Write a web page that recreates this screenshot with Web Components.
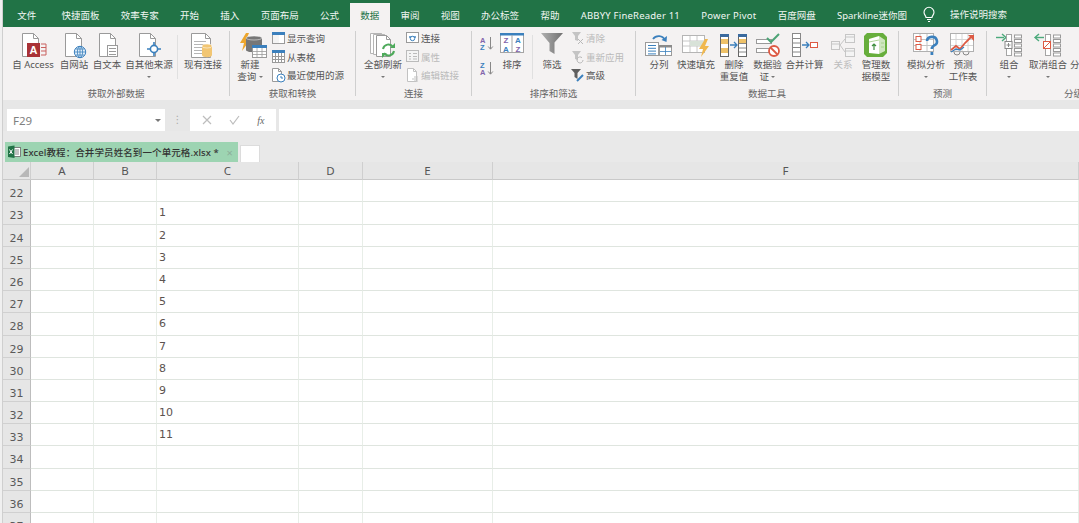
<!DOCTYPE html>
<html lang="zh"><head><meta charset="utf-8"><title>Excel</title>
<style>
html,body{margin:0;padding:0;width:1079px;height:523px;overflow:hidden;background:#fff}
body{font-family:"Noto Sans","Noto Sans CJK SC",sans-serif}
</style></head><body>
<x-app>
  <x-tabbar>
    <x-tab first>文件</x-tab><x-tab>快捷面板</x-tab><x-tab>效率专家</x-tab><x-tab>开始</x-tab><x-tab>插入</x-tab><x-tab>页面布局</x-tab><x-tab>公式</x-tab><x-tab active>数据</x-tab><x-tab>审阅</x-tab><x-tab>视图</x-tab><x-tab>办公标签</x-tab><x-tab>帮助</x-tab><x-tab wide>ABBYY FineReader 11</x-tab><x-tab wide>Power Pivot</x-tab><x-tab>百度网盘</x-tab><x-tab>Sparkline迷你图</x-tab>
    <x-tell>操作说明搜索</x-tell>
  </x-tabbar>
  <x-ribbon>
    <x-group w="227" pad="7" label="获取外部数据">
      <x-big w="46" icon="access">自 Access</x-big>
      <x-big w="36" icon="web">自网站</x-big>
      <x-big w="30" icon="text">自文本</x-big>
      <x-big w="54" icon="other" arrow="1">自其他来源</x-big>
      <x-vsep ml="1"></x-vsep>
      <x-big w="46" ml="2" icon="exist">现有连接</x-big>
    </x-group>
    <x-group w="126" pad="8" label="获取和转换">
      <x-big w="24" icon="query" lines="新建|查询" arrow="i">新建</x-big>
      <x-col ml="10">
        <x-small icon="showq">显示查询</x-small>
        <x-small icon="fromt">从表格</x-small>
        <x-small icon="recent">最近使用的源</x-small>
      </x-col>
    </x-group>
    <x-group w="116" pad="8" label="连接">
      <x-big w="38" icon="refresh" arrow="1">全部刷新</x-big>
      <x-col ml="4">
        <x-small icon="conn">连接</x-small>
        <x-small icon="prop" off>属性</x-small>
        <x-small icon="edit" off>编辑链接</x-small>
      </x-col>
    </x-group>
    <x-group w="164" pad="8" label="排序和筛选">
      <x-sortcol><x-icon name="az"></x-icon><x-icon name="za"></x-icon></x-sortcol>
      <x-big w="30" ml="3" icon="sort">排序</x-big>
      <x-vsep ml="5"></x-vsep>
      <x-big w="30" ml="4" icon="funnel">筛选</x-big>
      <x-col ml="4">
        <x-small icon="clear" off>清除</x-small>
        <x-small icon="reapply" off>重新应用</x-small>
        <x-small icon="adv">高级</x-small>
      </x-col>
    </x-group>
    <x-group w="263" pad="6" label="数据工具">
      <x-big w="34" icon="split">分列</x-big>
      <x-big w="40" icon="flash">快速填充</x-big>
      <x-big w="36" icon="dup" lines="删除|重复值">删除</x-big>
      <x-big w="31" icon="valid" lines="数据验|证" arrow="i">数据验</x-big>
      <x-big w="43" icon="cons">合并计算</x-big>
      <x-big w="34" icon="rel" off>关系</x-big>
      <x-big w="32" icon="model" lines="管理数|据模型">管理数</x-big>
    </x-group>
    <x-group w="88" pad="5" label="预测">
      <x-big w="44" icon="whatif" arrow="1">模拟分析</x-big>
      <x-big w="30" icon="fore" lines="预测|工作表">预测</x-big>
    </x-group>
    <x-group w="192" pad="4" label="分级显示" last>
      <x-big w="36" icon="grp" arrow="1">组合</x-big>
      <x-big w="42" icon="ungrp" arrow="1">取消组合</x-big>
      <x-big w="40" icon="sub">分类汇总</x-big>
    </x-group>
  </x-ribbon>
  <x-formula></x-formula>
  <x-doctabs>Excel教程：合并学员姓名到一个单元格.xlsx *</x-doctabs>
  <x-sheet></x-sheet>
</x-app>
<script>
const G='#9a9a9a',B='#3b80bd',GR='#217346',R='#dd5a44',O='#eda62d',L='#b5b5b5';
const page=(x,y,w,h,f=5,s=G)=>`<path d="M${x+.5} ${y+.5}h${w-f}l${f} ${f}v${h-f}h-${w}z" fill="#fff" stroke="${s}"/><path d="M${x+w-f+.5} ${y+.5}v${f}h${f}" fill="none" stroke="${s}"/>`;
const table=(x,y,w,h,c,s=G,top=B)=>{let r=`<rect x="${x+.5}" y="${y+.5}" width="${w}" height="${h}" fill="#fff" stroke="${s}"/><rect x="${x}" y="${y}" width="${w+1}" height="3" fill="${top}"/>`;for(let i=1;i<c[0];i++){const X=x+Math.round(w*i/c[0])+.5;r+=`<path d="M${X} ${y+3}V${y+h}" stroke="${s}"/>`}for(let i=1;i<c[1];i++){const Y=y+3+Math.round((h-3)*i/c[1])+.5;r+=`<path d="M${x} ${Y}H${x+w}" stroke="${s}"/>`}return r};
const lines=(x,y,w,n,d=3,s='#9a9a9a')=>{let r='';for(let i=0;i<n;i++)r+=`<path d="M${x} ${y+i*d+.5}h${w}" stroke="${s}"/>`;return r};
const arrow=(x,y,w,c=B,dir=1)=>`<path d="M${x} ${y}h${w*dir}m${-3*dir} -3l${3*dir} 3l${-3*dir} 3" fill="none" stroke="${c}" stroke-width="1.3"/>`;
const bolt=(x,y,s=1,c=O)=>`<path transform="translate(${x} ${y}) scale(${s})" d="M6 0L0 10h4L2 18L10 7H6L9 0z" fill="${c}"/>`;
const cyl=(x,y,w,h,c)=>`<path d="M${x} ${y+2}v${h-4}c0 3 ${w} 3 ${w} 0v-${h-4}z" fill="${c}"/><ellipse cx="${x+w/2}" cy="${y+2}" rx="${w/2}" ry="2" fill="${c}" stroke="#fff" stroke-width=".5"/>`;
const sicol=(x,y,n,w=8,h=3.5,s=G)=>{let r='';for(let i=0;i<n;i++)r+=`<rect x="${x+.5}" y="${y+i*(h+1.5)+.5}" width="${w}" height="${h}" fill="#fff" stroke="${s}"/>`;return r};
const ICONS={
 access:[26,25,page(2,0,16,23)+`<path d="M21 11h5v11h-5M21 14.5h5M21 18h5" fill="none" stroke="#c9605e"/><rect x="7" y="10" width="13" height="14" fill="#a93237"/><text x="13.5" y="21" font-size="11" font-weight="700" fill="#fff" text-anchor="middle" font-family="Liberation Sans">A</text>`],
 web:[24,25,page(3,0,16,23)+`<circle cx="18" cy="19" r="5.7" fill="#e4f0fa" stroke="${B}"/><path d="M12.5 19h11M18 13.3v11.4M13.5 16h9M13.5 22h9" stroke="${B}" stroke-width=".8"/><ellipse cx="18" cy="19" rx="2.6" ry="5.7" fill="none" stroke="${B}" stroke-width=".8"/>`],
 text:[24,25,page(4,0,16,23)+`<rect x="12.5" y="12.5" width="10" height="11" fill="#fff" stroke="${G}"/>`+lines(14,15,7,3,3)],
 other:[26,25,page(3,0,16,23)+`<circle cx="18" cy="16" r="3.6" fill="#fff" stroke="${B}" stroke-width="1.6"/><path d="M18 9v3M18 20v3M11 16h3M22 16h3" stroke="${B}" stroke-width="1.6"/>`],
 exist:[26,25,page(1,0,19,24)+lines(4,8,12,5,3,'#b5b5b5')+cyl(12,11,10,13,'#f2c673')],
 query:[36,25,bolt(8,0,1,O)+cyl(14,3,16,16,'#777')+`<rect x="20.5" y="12.5" width="14" height="12" fill="#fff" stroke="${G}"/><rect x="20" y="12" width="15" height="3" fill="${B}"/><path d="M25 15v9M30 15v9M21 18.5h13M21 21.5h13" stroke="${G}" stroke-width=".8"/>`],
 showq:[13,13,table(0,0,12,11,[2,1],G)+`<rect x="1" y="3" width="6" height="8" fill="#f4f4f4"/>`],
 fromt:[13,13,table(0,0,12,12,[4,3],G)],
 recent:[14,15,page(0,0,9,13,3)+`<circle cx="9" cy="10" r="4" fill="#fff" stroke="${B}"/><path d="M9 8v2h2" fill="none" stroke="${B}"/>`],
 refresh:[26,25,page(0,0,14,20,3,L)+page(3,1,14,20,3,L)+page(6,2,14,21,4,G)+`<path d="M13 16a5.5 5.5 0 0 1 10-2M24 18a5.5 5.5 0 0 1-10 2" fill="none" stroke="#4eaa5b" stroke-width="2"/><path d="M25 10v5h-5zM12 25v-5h5z" fill="#4eaa5b"/>`],
 conn:[13,13,`<rect x=".5" y=".5" width="12" height="10" fill="#fff" stroke="${G}"/><path d="M3 5h7" stroke="${B}" stroke-width="1.400"/><circle cx="6.5" cy="6.500" r="2.200" fill="#fff" stroke="${B}"/>`],
 prop:[13,13,`<rect x=".5" y=".5" width="12" height="11" fill="#f4f4f4" stroke="#bbb"/><path d="M3 3.5h2M7 3.5h4M3 6.5h2M7 6.5h4M3 9h2M7 9h4" stroke="#bbb"/>`],
 edit:[13,14,page(1,0,9,13,3,'#c2c2c2')+`<path d="M6 11h6M8 9h4M8 13h4" stroke="#c2c2c2"/>`],
 az:[14,15,`<text x="0" y="7" font-size="7.5" font-weight="700" fill="#8265ab" font-family="Liberation Sans">A</text><text x="0" y="14" font-size="7.5" font-weight="700" fill="#3b80bd" font-family="Liberation Sans">Z</text><path d="M10.5 1v12m-2.3-2.5l2.3 2.7l2.3-2.7" fill="none" stroke="#888"/>`],
 za:[14,15,`<text x="0" y="7" font-size="7.5" font-weight="700" fill="#3b80bd" font-family="Liberation Sans">Z</text><text x="0" y="14" font-size="7.5" font-weight="700" fill="#8265ab" font-family="Liberation Sans">A</text><path d="M10.5 1v12m-2.3-2.5l2.3 2.7l2.3-2.7" fill="none" stroke="#888"/>`],
 sort:[24,25,`<rect x=".5" y="1.500" width="23" height="18" fill="#fff" stroke="#a5a5a5"/><rect x="0" y="0" width="24" height="2.5" fill="${B}"/><path d="M12 2v18" stroke="#a5a5a5"/><g font-size="8" font-weight="700" font-family="Liberation Sans" text-anchor="middle"><text x="6" y="10" fill="#8265ab">Z</text><text x="6" y="18.5" fill="${B}">A</text><text x="18" y="10" fill="${B}">A</text><text x="18" y="18.5" fill="#8265ab">Z</text></g>`],
 funnel:[24,25,`<defs><linearGradient id="f" x1="0" x2="1"><stop offset="0" stop-color="#b0b0b0"/><stop offset="1" stop-color="#707070"/></linearGradient></defs><path d="M1 0h22l-8.500 9.500V21l-5-3v-8z" fill="url(#f)"/>`],
 clear:[13,14,`<path d="M1 1h9L7 5v5L4 9V5z" fill="#c4c4c4"/><path d="M7 8l5 5m0-5l-5 5" stroke="#b8b8b8"/>`],
 reapply:[13,14,`<path d="M1 1h9L7 5v5L4 9V5z" fill="#c4c4c4"/><path d="M12 10a3 3 0 1 1-1-2.300" fill="none" stroke="#b8b8b8"/>`],
 adv:[13,14,`<path d="M0 1h10L6.500 5v6L3.500 9V5z" fill="#5f5f5f"/><path d="M6 13l6-6" stroke="${B}" stroke-width="2"/>`],
 split:[28,25,`<rect x=".5" y="9.500" width="13" height="13" fill="#fff" stroke="${G}"/>`+lines(3,12,8,4,2.800,B)+`<rect x="14.500" y="12.500" width="12" height="10" fill="#fff" stroke="${G}"/><rect x="14" y="12" width="13" height="2.500" fill="#8a8a8a"/><path d="M20.500 14v8M15 18.500h11" stroke="${B}" stroke-width=".8"/><path d="M8 6a7 7 0 0 1 12 1" fill="none" stroke="${B}" stroke-width="1.800"/><path d="M22 3l-.5 6l-5-2z" fill="${B}"/>`],
 flash:[28,25,`<rect x=".5" y="2.500" width="22" height="17" fill="#fff" stroke="#b5b5b5"/><path d="M8 3v16M15 3v16M1 8h21M1 13h21" stroke="#c8c8c8"/><rect x="8" y="8" width="14" height="5" fill="#d8e2d8"/>`+bolt(17,6,1,'#f0b84f')],
 dup:[28,25,`<rect x=".5" y="1.500" width="8" height="22" fill="#fff" stroke="#666"/><rect x="1" y="6" width="7" height="5" fill="#efc268"/><rect x="1" y="15" width="7" height="5" fill="#efc268"/><rect x="0" y="1" width="9" height="3" fill="#3a6a9e"/><rect x="18.500" y="1.500" width="8" height="22" fill="#fff" stroke="#666"/><rect x="19" y="6" width="7" height="5" fill="#efc268"/><rect x="18" y="1" width="9" height="3" fill="#3a6a9e"/><path d="M19 10.500h7M19 15h7M19 19h7" stroke="#888"/>`+arrow(10,12,7)],
 valid:[24,25,`<rect x=".5" y="6.500" width="15" height="4" fill="#fff" stroke="${G}"/><rect x=".5" y="15.500" width="15" height="4" fill="#fff" stroke="${G}"/><path d="M11 5l4 4l8-8" fill="none" stroke="#4ca476" stroke-width="2"/><circle cx="18" cy="18" r="5" fill="#fff" stroke="${R}" stroke-width="1.800"/><path d="M14.500 14.500l7 7" stroke="${R}" stroke-width="1.800"/>`],
 cons:[26,25,`<rect x=".5" y=".5" width="8" height="23" fill="#fff" stroke="#888"/>`+lines(1,5,7,4,4.500,'#888')+arrow(10,12,7)+`<rect x="18.500" y="9.500" width="7" height="5" fill="#fff" stroke="${R}"/>`],
 rel:[24,25,`<g stroke="#c6c6c6" fill="#f4f4f4"><rect x=".5" y="8.500" width="8" height="8"/><rect x="14.500" y="1.500" width="9" height="8"/><rect x="14.500" y="15.500" width="9" height="8"/><path d="M9 12l5-6M9 12l5 7" fill="none"/><path d="M1 11h7M15 4h8M15 18h8" fill="none"/></g>`],
 model:[24,25,`<path d="M3 0h16l4 4v16l-4 4H3l-3-3V3z" fill="#67ae3c"/><path d="M5 6l10-3v18L5 20z" fill="#fff"/><path d="M15 3l6 4v11l-6 3z" fill="#cfe6bf"/><path d="M10 17v-6m-2 2l2-2l2 2" fill="none" stroke="#3f8f3f" stroke-width="1.200"/><path d="M5 9l10-2M17 10h3M17 14h3" stroke="#9ccb80" stroke-width=".8"/>`],
 whatif:[26,25,`<rect x=".5" y=".5" width="20" height="18" fill="#fff" stroke="#b0b0b0"/><path d="M7 1v17M14 1v17M1 6.500h19M1 12.500h19" stroke="#c4c4c4"/><rect x="3" y="3.500" width="5" height="5" fill="#fff" stroke="${R}"/><rect x="3" y="11.500" width="5" height="5" fill="#fff" stroke="${R}"/><path d="M14 8a5 4.500 0 1 1 7 4.500c-1.500 1-2.200 1.500-2.200 3.500" fill="none" stroke="${B}" stroke-width="2.600"/><rect x="17.500" y="19" width="2.800" height="3" fill="${B}"/>`],
 fore:[26,25,`<rect x=".5" y=".5" width="23" height="18" fill="#fff" stroke="#b0b0b0"/><path d="M6 1v17M12 1v17M18 1v17M1 6.500h22M1 12.500h22" stroke="#d6d6d6"/><path d="M1 17l5-4l4 3l5-6l7-7" fill="none" stroke="${R}" stroke-width="1.800"/><path d="M18 2h6v6z" fill="${R}"/><path d="M1 19l5-3l4 1l4-3" fill="none" stroke="${B}" stroke-width="1.300"/><path d="M4 19a3 3 0 0 0 6 0M13 19a3 3 0 0 0 6 0" fill="none" stroke="#888"/>`],
 grp:[28,25,`<path d="M1 4.500h8" stroke="#4caa7c" stroke-width="1.400"/><path d="M7 1l4 3.500l-4 3.500" fill="none" stroke="#4caa7c" stroke-width="1.400"/><rect x="11.500" y="1.500" width="5" height="21" fill="#fff" stroke="#a5a5a5"/><rect x="10" y="8.500" width="7" height="7" fill="#fff" stroke="#888"/><path d="M13.500 10v4M11.500 12h4" stroke="#888"/>`+sicol(19,1.500,5,7,3)],
 ungrp:[28,25,`<path d="M10 4.500H2" stroke="#4caa7c" stroke-width="1.400"/><path d="M5 1L1 4.500l4 3.500" fill="none" stroke="#4caa7c" stroke-width="1.400"/><rect x="11.500" y="1.500" width="5" height="21" fill="#fff" stroke="#a5a5a5"/><rect x="9.500" y="8.500" width="7" height="7" fill="#fff" stroke="${R}"/><path d="M10 15l6-6" stroke="${R}"/>`+sicol(19,1.500,5,7,3)],
 sub:[28,25,`<rect x="6.500" y="1.500" width="7" height="21" fill="#fff" stroke="#a5a5a5"/>`+lines(7,6,6,4,4.500,'#a5a5a5')],
 bulb:[12,15,`<path d="M3 10.500c0-1.800-2-2.600-2-5.200a5 5 0 0 1 10 0c0 2.600-2 3.400-2 5.200z" fill="none" stroke="#fff" stroke-width="1.100"/><path d="M4 12.500h4M5 14.500h2" stroke="#fff" stroke-width="1"/>`],
 xl:[14,14,`<rect x="6" y="2.500" width="7.500" height="9" fill="#fff" stroke="#666" stroke-width=".8"/><path d="M8 5h4M8 7h4M8 9h4" stroke="#555" stroke-width=".7"/><path d="M1 1.500l6.500-1V13L1 12z" fill="${GR}"/><path d="M2.500 4.500l3 4.500m0-4.500l-3 4.500" stroke="#fff"/>`]
};
function def(name,css,html,init){customElements.define(name,class extends HTMLElement{connectedCallback(){if(this.shadowRoot)return;const s=this.attachShadow({mode:'open'});s.innerHTML=`<style>${css}</style>${typeof html==='function'?html(this):html}`;init&&init(this,s)}})}
const a=(e,n,d='')=>e.getAttribute(n)??d;
def('x-icon',':host{display:block;line-height:0} svg{display:block;overflow:visible}',e=>{const i=ICONS[a(e,'name')];return `<svg width="${i[0]}" height="${i[1]}" viewBox="0 0 ${i[0]} ${i[1]}" aria-hidden="true">${i[2]}</svg>`});
def('x-app',':host{display:grid;grid-template-rows:27px 73px 31px 31px 1fr;width:1076px;height:523px;padding-left:3px;background:linear-gradient(90deg,#f0f0f0 2px,#cfcfcf 2px);overflow:hidden}','<slot></slot>');
def('x-tabbar',':host{display:flex;align-items:flex-end;background:#217346;min-width:0;overflow:hidden}','<slot></slot>');
def('x-tab',`:host{display:block;flex:none;height:24px;padding:0 10.65px;font-size:9.5px;line-height:25px;color:#f2f7f4;white-space:nowrap}
:host([first]){margin-left:3.5px;margin-right:4px}
:host([wide]){letter-spacing:.21px}
:host([active]){background:#f4f2f2;color:#217346}`,'<slot></slot>');
def('x-tell',`:host{display:flex;align-items:center;gap:15px;flex:none;height:24px;margin-left:5.500px;font-size:9.5px;color:#eef4f0;white-space:nowrap;position:relative;top:-1px}`,'<x-icon name="bulb"></x-icon><span><slot></slot></span>');
def('x-ribbon',':host{display:flex;background:#f4f2f2;padding-top:4px;box-sizing:border-box;height:73px;overflow:hidden;min-width:0}','<slot></slot>');
def('x-group',`:host{display:block;flex:none;box-sizing:border-box;height:65px;border-right:1px solid #cfcfcf;color:#555;font-size:9.5px}
:host([last]){border-right:0}
.b{display:flex;height:57px;box-sizing:border-box}
.l{text-align:center;line-height:12px;height:8px;color:#666;white-space:nowrap}`,
 e=>`<style>:host{width:${a(e,'w')}px}.b{padding-left:${a(e,'pad')}px}</style><div class="b"><slot></slot></div><div class="l">${a(e,'label')}</div>`);
def('x-big',`:host{display:flex;flex-direction:column;align-items:center;flex:none;padding-top:2px;color:#555;font-size:9.5px;line-height:12px;white-space:nowrap}
:host([off]){color:#bcbcbc}
.i{height:26px;display:flex;justify-content:center;width:100%}
.t{text-align:center;display:flex;flex-direction:column;align-items:center}
.d{display:inline-block;width:0;height:0;border:2.2px solid transparent;border-top:2.600px solid #777;border-bottom:0;vertical-align:middle}
.n{height:12px;display:flex;align-items:center;justify-content:center}`,
 e=>{const ls=a(e,'lines'),ar=a(e,'arrow');const sl=ls?ls.split('|'):null;
  const second=sl?`<div>${sl[1]}${ar==='i'?' <span class="d"></span>':''}</div>`:(ar?'<div class="n"><span class="d"></span></div>':'');
  return `<style>:host{width:${a(e,'w')}px;margin-left:${a(e,'ml','0')}px}</style><div class="i"><x-icon name="${a(e,'icon')}"></x-icon></div><div class="t"><div><slot></slot></div>${second}</div>`});
def('x-vsep',':host{display:block;flex:none;width:1px;height:44px;margin-top:4px;background:#e0e0e0}',e=>`<style>:host{margin-left:${a(e,'ml','0')}px}</style>`);
def('x-col',':host{display:flex;flex-direction:column;flex:none;margin-top:-2px}',e=>`<style>:host{margin-left:${a(e,'ml','0')}px}</style><slot></slot>`);
def('x-sortcol',':host{display:flex;flex-direction:column;gap:10px;flex:none;width:14px;padding-top:5px}','<slot></slot>');
def('x-small',`:host{display:flex;align-items:center;gap:2px;height:18.500px;font-size:9.5px;color:#555;white-space:nowrap}
:host([off]){color:#bababa}.i{width:13px;display:flex;justify-content:center}`,e=>`<div class="i"><x-icon name="${a(e,'icon')}"></x-icon></div><slot></slot>`);
def('x-formula',`:host{display:flex;box-sizing:border-box;height:31px;padding:9px 0 0 4px;background:#e7e7e7;font-family:"DejaVu Sans",sans-serif}
.box{background:#fff;height:22px;box-sizing:border-box;display:flex;align-items:center}
.name{width:158px;padding:0 4px 0 6px;justify-content:space-between;color:#808080;font-size:11.500px;font-family:"Noto Sans",sans-serif}
.d{width:0;height:0;border:3px solid transparent;border-top:3.500px solid #777;border-bottom:0}
.dots{width:25px;text-align:center;color:#aaa;font-size:10px;line-height:22px}
.btns{width:86px;justify-content:space-around;padding:0 3px;color:#bbb;font-size:12px}
.fx{font:italic 10px "Liberation Serif",serif;color:#666}
.inp{flex:1;margin-left:3px}`,`<div class="box name"><span>F29</span><span class="d"></span></div><div class="dots">⋮</div><div class="box btns"><svg width="10" height="10" viewBox="0 0 10 10"><path d="M1 1l8 8m0-8l-8 8" stroke="#bdbdbd" stroke-width="1.200"/></svg><svg width="11" height="10" viewBox="0 0 11 10"><path d="M1 5l3 4l6-8" fill="none" stroke="#bdbdbd" stroke-width="1.200"/></svg><span class="fx">fx</span></div><div class="box inp"></div>`);
def('x-doctabs',`:host{display:flex;align-items:flex-end;box-sizing:border-box;height:31px;background:#e9e9e9;padding-left:2px;font-size:9.5px;color:#333}
.t{display:flex;align-items:center;width:233px;height:20px;box-sizing:border-box;background:#9dd4b2;padding:0 0 0 2px;font-weight:500;white-space:nowrap;letter-spacing:.1px}
.t x-icon{margin-right:2px}
.x{margin-left:auto;margin-right:5px;color:#8cae9a;font-size:11px;font-weight:400}
.n{width:20px;height:17px;margin-left:2px;background:#fff;border:1px solid #dcdcdc;border-bottom:0;box-sizing:border-box}`,`<div class="t"><x-icon name="xl"></x-icon><span><slot></slot></span><span class="x">×</span></div><div class="n"></div>`);
def('x-sheet',`:host{display:grid;grid-template-columns:28px 63px 63px 142px 64px 130px 1fr;grid-template-rows:18.300px;grid-auto-rows:22.180px;min-height:0;overflow:hidden;background:#fff;font:11px "DejaVu Sans",sans-serif;color:#555}
.c{border-right:1px solid #e8eee8;border-bottom:1px solid #dfe5df;box-sizing:border-box;padding-left:2px;line-height:22px;color:#5c5350;min-width:0}
.h{background:#e6e6e6;border-right:1px solid #cfcfcf;border-bottom:1px solid #c9c9c9;text-align:center;box-sizing:border-box;line-height:17px;font-family:"Noto Sans",sans-serif;font-size:11.500px;color:#555}
.r{background:#e6e6e6;border-right:1px solid #bdbdbd;border-bottom:1px solid #d0d0d0;text-align:center;box-sizing:border-box;line-height:27px;height:22.180px;color:#5a5a5a;overflow:hidden}
.k{background:#e6e6e6;border-right:1px solid #cfcfcf;border-bottom:1px solid #c9c9c9;position:relative}
.k svg{display:block;margin:5px 0 0 16px}`,()=>{
 let h='<div class="k"><svg width="10" height="10" viewBox="0 0 10 10"><path d="M10 0v10H0z" fill="#b8b8b8"/></svg></div>';
 for(const c of 'ABCDEF')h+=`<div class="h">${c}</div>`;
 for(let r=22;r<=37;r++){h+=`<div class="r">${r}</div>`;for(let c=0;c<6;c++){const v=(c===2&&r>=23&&r<=33)?r-22:'';h+=`<div class="c">${v}</div>`}}
 return h});
</script>
</body></html>
